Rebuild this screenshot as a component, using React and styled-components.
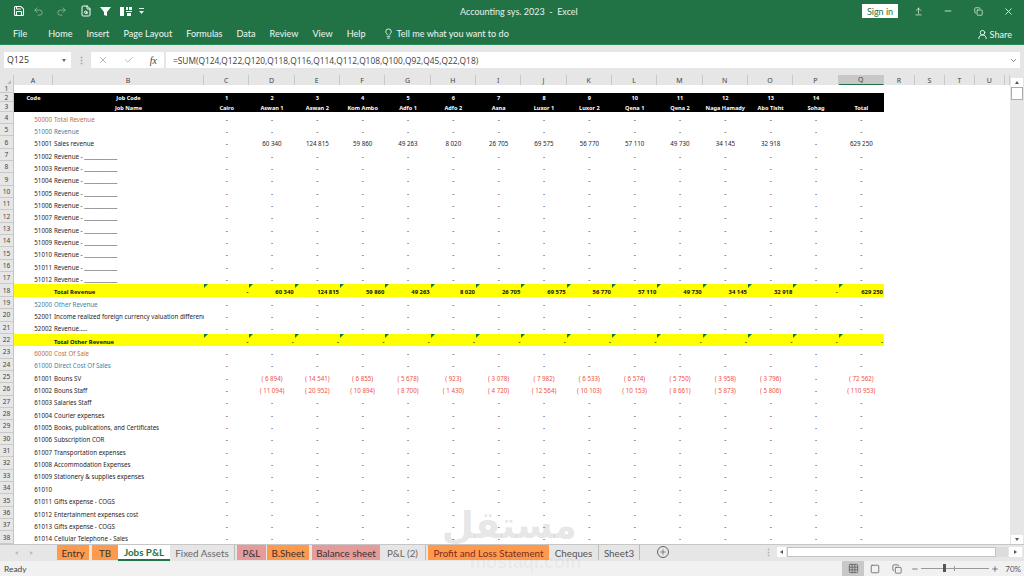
import React from "react";
import styled, { createGlobalStyle } from "styled-components";
import { Save, Undo2, Redo2, FileSearch, Lightbulb, UserRound, X, Check, Minus, Plus, Grid3x3, ChevronDown, Square, Copy, ArrowUpFromLine } from "lucide-react";

const Global = createGlobalStyle`
  html, body { margin: 0; padding: 0; background: #fff; }
  #root { width: 1024px; height: 576px; overflow: hidden; }
  * { box-sizing: border-box; }
`;

const UI = `Lato, "Open Sans", sans-serif`;
const BOX = `"Open Sans", "Noto Sans", sans-serif`;
const CELL = `"Noto Sans", "Liberation Sans", sans-serif`;

const Page = styled.div`
  position: relative; width: 1024px; height: 576px; display: flex; flex-direction: column;
  overflow: hidden; font-family: ${UI}; background: #e6e6e6;
`;
const Green = styled.header`
  height: 45px; background: #217346; color: #fff; display: flex; flex-direction: column;
  border-bottom: 1px solid #2b8a55; flex: none;
`;
const TitleBar = styled.div`
  height: 22px; display: grid; grid-template-columns: 440px 1fr auto; align-items: center;
`;
const Qat = styled.div`
  display: flex; align-items: center; gap: 0; padding-left: 13px; color: #fff;
`;
const QatIcon = styled.span`
  width: ${p => p.$w || 21}px; display: flex; justify-content: flex-start; align-items: center; opacity: ${p => (p.$dim ? 0.45 : 1)};
`;
const Title = styled.div`
  font-size: 9px; padding-left: 20px; color: #e8f1ec; white-space: pre;
`;
const WindowControls = styled.div`
  display: flex; align-items: center; color: #dfeee6; padding-right: 1px;
`;
const SignIn = styled.button`
  width: 36px; height: 14px; border: 0; padding: 0; background: #fff; color: #217346; font: 9px ${UI};
  margin-right: 5px;
`;
const WinBtn = styled.span`
  width: 30px; display: flex; justify-content: center; align-items: center;
`;
const TabsRow = styled.nav`
  height: 22px; display: flex; align-items: center; padding-left: 13px; font-size: 9.1px; color: #f0f6f2;
`;
const RibbonTab = styled.span`
  margin-right: ${p => p.$gap ?? 14}px; white-space: nowrap;
`;
const TellMe = styled.span`
  display: flex; align-items: center; gap: 3px; white-space: nowrap; margin-left: 3px;
`;
const Share = styled.span`
  margin-left: auto; margin-right: 12px; display: flex; align-items: center; gap: 2px; padding-top: 2px;
`;

const FormulaBar = styled.div`
  height: 30px; flex: none; display: flex; align-items: flex-start; padding: 7px 4px 0 4px; font: 8.8px ${BOX}; color: #444;
`;
const NameBox = styled.div`
  width: 67px; height: 16px; background: #fff; display: flex; align-items: center; justify-content: space-between; padding: 0 3px 0 3px; color: #333;
`;
const Caret = styled.span`
  width: 0; height: 0; border: 2.5px solid transparent; border-top: 3px solid #666; border-bottom: 0;
  margin-right: 2px;
`;
const Grip = styled.span`
  width: 20px; height: 16px; display: flex; align-items: center; justify-content: center;
  color: #999; font-size: 9px; font-weight: 700; letter-spacing: 0;
`;
const FxButtons = styled.div`
  width: 73px; height: 16px; background: #fff; display: flex; align-items: center; justify-content: space-between; padding: 0 7px; color: #aaa;
`;
const Fx = styled.i`
  font: italic 10px "Liberation Serif", serif; color: #444;
`;
const FormulaInput = styled.div`
  flex: 1; height: 16px; margin-left: 2px; background: #fff; display: flex; align-items: center; justify-content: space-between;
  padding: 0 2px 0 7px; color: #3d3d3d; font-size: 8.36px; white-space: nowrap;
`;

const SheetArea = styled.div`
  flex: 1; min-height: 0; display: flex; background: #fff;
`;
const SheetMain = styled.div`
  width: 1010px; display: flex; flex-direction: column; overflow: hidden;
`;
const ColHead = styled.div`
  height: 10px; display: flex; background: #e6e6e6; flex: none; margin-bottom: 0;
`;
const Corner = styled.div`
  width: 14px; position: relative; background: #e6e6e6; border-right: 1px solid #c9c9c9;
  &::after { content: ""; position: absolute; right: 2px; bottom: 1px; border: 2.5px solid #bbb; border-top-color: transparent; border-left-color: transparent; }
`;
const ColLabel = styled.div`
  width: ${p => p.$w}px; flex: none; display: flex; justify-content: center; align-items: center;
  font: 7px ${CELL}; color: #444; border-right: 1px solid #c9c9c9;
  background: ${p => (p.$sel ? "#c8c8c8" : "transparent")};
  border-bottom: ${p => (p.$sel ? "1px solid #217346" : "0")};
`;
const Row = styled.div`
  display: flex; height: ${p => p.$h}px; flex: none;
`;
const RowNum = styled.div`
  width: 14px; flex: none; background: #e6e6e6; border-right: 1px solid #c4c4c4; border-bottom: 1px solid #c9c9c9;
  display: flex; justify-content: center; align-items: center; font: 6.6px ${CELL}; color: #444;
`;
const RowBody = styled.div`
  width: 870px; flex: none; display: grid; grid-template-columns: 39px 151px repeat(15, 1fr);
  background: ${p => p.$fill || "transparent"}; color: ${p => p.$ink || "#262626"};
  font-family: ${CELL}; font-size: ${p => p.$size || 6.2}px; font-weight: ${p => (p.$bold ? 700 : 400)};
`;
const Cell = styled.div`
  position: relative; min-width: 0; display: flex; align-items: flex-end; padding-bottom: ${p => p.$pb ?? 0.5}px; white-space: nowrap; overflow: hidden;
  justify-content: ${p => p.$align || "center"}; padding-right: ${p => (p.$align === "flex-end" ? 1 : 0)}px;
  padding-left: ${p => (p.$pl ?? 0)}px;
  color: ${p => p.$ink || "inherit"};
`;
const Flag = styled.span`
  position: absolute; left: 0; top: 0; border: 2px solid transparent; border-top-color: #147a3c; border-left-color: #147a3c;
`;
const VScroll = styled.aside`
  width: 14px; flex: none; background: #e6e6e6; display: flex; flex-direction: column; padding: 3px 1px 0 1px;
`;
const ScrollBtn = styled.div`
  height: 9px; background: #fff; display: flex; align-items: center; justify-content: center; flex: none;
`;
const Thumb = styled.div`
  height: 13px; background: #fff; border: 1px solid #ababab; flex: none;
`;
const Spacer = styled.div`flex: 1;`;
const Tri = styled.span`
  width: 0; height: 0; border: 2px solid transparent;
  ${p => p.$d === "up" && "border-bottom: 3px solid #555; border-top: 0;"}
  ${p => p.$d === "down" && "border-top: 3px solid #555; border-bottom: 0;"}
  ${p => p.$d === "left" && `border-right: 3px solid ${p.$c || "#555"}; border-left: 0;`}
  ${p => p.$d === "right" && `border-left: 3px solid ${p.$c || "#555"}; border-right: 0;`}
`;

const TabBar = styled.div`
  height: 17px; flex: none; display: flex; align-items: flex-start; background: #e6e6e6; border-top: 1px solid #c6c6c6;
`;
const TabNav = styled.div`
  width: 55px; height: 15px; display: flex; align-items: center; gap: 12px; padding-left: 15px;
`;
const SheetTab = styled.div`
  margin-left: ${p => p.$ml ?? 0}px; width: ${p => p.$w}px; height: 15px; display: flex; align-items: center; justify-content: center; white-space: nowrap;
  font-size: 9.8px; flex: none; background: ${p => p.$bg || "transparent"};
  color: ${p => p.$ink || "#333"};
  ${p => p.$plain && "border-right: 1px solid #bbb;"}
  ${p => p.$active && "background:#fff; font-weight:700; border-bottom:2px solid #217346; height:16px;"}
`;
const AddTab = styled.span`
  margin-left: 17px; margin-top: 1px; width: 12px; height: 12px; border: 1px solid #666; border-radius: 50%; display: flex; align-items: center; justify-content: center; color: #555; flex: none;
`;
const Splitter = styled.span`
  margin-left: 95px; margin-top: 2px; width: 7px; color: #aaa; font-size: 9px; font-weight: 700; line-height: 12px; text-align: center;
`;
const HScroll = styled.div`
  margin-left: 6px; margin-top: 2px; width: 245px; height: 10px; display: flex; align-items: stretch; gap: 1px;
`;
const HBtn = styled.div`
  width: ${p => p.$w}px; background: ${p => p.$bg || "#fff"}; display: flex; align-items: center; justify-content: center;
`;
const HTrack = styled.div`
  flex: 1; background: #dcdcdc; display: flex;
`;
const HThumb = styled.div`
  width: 209px; background: #fff; border: 1px solid #c4c4c4;
`;

const Status = styled.footer`
  height: 15px; flex: none; background: #f1f1f1; display: flex; align-items: center; font-size: 8.4px; color: #444; padding-left: 4px;
`;
const ViewBtn = styled.span`
  width: 22px; height: 15px; display: flex; align-items: center; justify-content: center; color: #666;
  background: ${p => (p.$on ? "#c8c8c8" : "transparent")};
`;
const StatusRight = styled.div`
  margin-left: auto; display: flex; align-items: center;
`;
const Zoom = styled.div`
  width: 68px; height: 1px; background: #999; position: relative; margin: 0 2px;
`;
const ZoomThumb = styled.span`
  position: absolute; left: 22px; top: -4px; width: 3px; height: 8px; background: #555;
`;
const ZoomTick = styled.span`
  position: absolute; left: 33px; top: -2px; width: 1px; height: 5px; background: #999;
`;
const ZoomPct = styled.span`
  margin-left: 6px; margin-right: 3px; font-size: 8px; color: #555;
`;
const Watermark = styled.div`
  position: absolute; left: 447px; top: 496px; width: 130px; text-align: center; color: rgba(0,0,0,.11);
  font: 700 37px/60px "DejaVu Sans", sans-serif; pointer-events: none; direction: rtl;
`;
const WatermarkLatin = styled.div`
  position: absolute; left: 470px; top: 551px; color: rgba(0,0,0,.04);
  font: 700 18px/22px "Liberation Sans", sans-serif; pointer-events: none;
`;

const cols = [["A",39],["B",151],...["C","D","E","F","G","H","I","J","K","L","M","N","O","P","Q"].map(c=>[c,45.33]),["R",31],["S",30],["T",30],["U",30],["",5]];
const nums = ["1","2","3","4","5","6","7","8","9","10","11","12","13","14",""];
const names = ["Cairo","Aswan 1","Aswan 2","Kom Ambo","Adfo 1","Adfo 2","Asna","Luxor 1","Luxor 2","Qena 1","Qena 2","Naga Hamady","Abo Tisht","Sohag","Total"];
const sales = ["-","60 340","124 815","59 860","49 263","8 020","26 705","69 575","56 770","57 110","49 730","34 145","32 918","-","629 250"];
const dashes = Array(15).fill("-");
const b25 = ["-","( 6 894)","( 14 541)","( 6 855)","( 5 678)","(  923)","( 3 078)","( 7 982)","( 6 533)","( 6 574)","( 5 750)","( 3 958)","( 3 796)","-","( 72 562)"];
const b26 = ["-","( 11 094)","( 20 952)","( 10 894)","( 8 700)","( 1 430)","( 4 720)","( 12 564)","( 10 103)","( 10 153)","( 8 661)","( 5 873)","( 5 806)","-","( 110 953)"];
const ORANGE = "#c0703a", BLUE = "#3f7f9f";
const blank = "Revenue - ____________";
const rows = [
  [4,"50000","Total Revenue",ORANGE],[5,"51000","Revenue",BLUE],[6,"51001","Sales revenue",null,sales],
  ...Array.from({length:11},(_,i)=>[7+i,String(51002+i),blank]),
  [18,"","Total Revenue","total",sales],
  [19,"52000","Other Revenue",BLUE],[20,"52001","Income realized foreign currency valuation differences"],[21,"52002","Revenue....."],
  [22,"","Total Other Revenue","total",dashes],
  [23,"60000","Cost Of Sale",ORANGE],[24,"61000","Direct Cost Of Sales",BLUE],
  [25,"61001","Bouns SV",null,b25],[26,"61002","Bouns Staff",null,b26],
  [27,"61003","Salaries Staff"],[28,"61004","Courier expenses"],[29,"61005","Books, publications, and Certificates"],
  [30,"61006","Subscription COR"],[31,"61007","Transportation expenses"],[32,"61008","Accommodation Expenses"],
  [33,"61009","Stationery & supplies expenses"],[34,"61010",""],[35,"61011","Gifts expense - COGS"],
  [36,"61012","Entertainment expenses cost"],[37,"61013","Gifts expense - COGS"],[38,"61014","Cellular Telephone - Sales"],
];
const ribbon = [["File",21],["Home"],["Insert"],["Page Layout"],["Formulas"],["Data"],["Review"],["View"],["Help",14]];
const tabs = [
  {t:"Entry",w:32,bg:"#ff9a4d",ml:2},{t:"TB",w:26,bg:"#ff9a4d",ml:3},{t:"Jobs P&L",w:52,active:1,ink:"#217346"},
  {t:"Fixed Assets",w:65,ink:"#666",plain:1},{t:"P&L",w:29,bg:"#e79a9a",ml:2},{t:"B.Sheet",w:42,bg:"#ff9a4d",ml:1},
  {t:"Balance sheet",w:68,bg:"#e79a9a",ml:3},{t:"P&L (2)",w:46,ink:"#666",plain:1},{t:"Profit and Loss Statement",w:121,bg:"#ff9a4d",ml:2,ink:"#7a2a1a"},
  {t:"Cheques",w:50,ink:"#555",plain:1},{t:"Sheet3",w:41,ink:"#555",plain:1},
];

function DataCells({ r }) {
  const [, , , kind, values] = r;
  const isTotal = kind === "total";
  const data = values || dashes;
  return data.map((v, i) => {
    const red = v.startsWith("(");
    return (
      <Cell key={i} $align={isTotal ? "flex-end" : "center"} $ink={red ? "#f0503f" : undefined}>
        {isTotal && <Flag />}
        {v}
      </Cell>
    );
  });
}

export default function App() {
  return (
    <Page>
      <Global />
      <Green>
        <TitleBar>
          <Qat>
            <QatIcon $w={20}><Save size={12} strokeWidth={2.2} /></QatIcon>
            <QatIcon $w={23} $dim><Undo2 size={11} /></QatIcon>
            <QatIcon $w={24} $dim><Redo2 size={11} /></QatIcon>
            <QatIcon $w={20}><FileSearch size={12} /></QatIcon>
            <QatIcon $w={20}>
              <svg width="11" height="11" viewBox="0 0 11 11"><path d="M0 1h11L7 6v4L4 9V6z" fill="#fff" /></svg>
            </QatIcon>
            <QatIcon $w={19}>
              <svg width="12" height="11" viewBox="0 0 12 11"><path d="M0 1h4v9H0zM6 1h2v3H6zM9 1h3v3H9zM6 5h6v1H6zM7 7h4v3H7z" fill="#fff" /></svg>
            </QatIcon>
            <QatIcon $w={8}>
              <svg width="5" height="6" viewBox="0 0 5 6"><path d="M0 0h5v1H0zM0 3h5L2.500 6z" fill="#dfeee6" /></svg>
            </QatIcon>
          </Qat>
          <Title>Accounting sys. 2023  -  Excel</Title>
          <WindowControls>
            <SignIn>Sign in</SignIn>
            <WinBtn><ArrowUpFromLine size={9} /></WinBtn>
            <WinBtn><Minus size={10} /></WinBtn>
            <WinBtn><Copy size={9} /></WinBtn>
            <WinBtn><X size={11} /></WinBtn>
          </WindowControls>
        </TitleBar>
        <TabsRow>
          {ribbon.map(([t, g]) => <RibbonTab key={t} $gap={g}>{t}</RibbonTab>)}
          <TellMe><Lightbulb size={11} />Tell me what you want to do</TellMe>
          <Share><UserRound size={11} />Share</Share>
        </TabsRow>
      </Green>
      <FormulaBar>
        <NameBox>Q125<Caret /></NameBox>
        <Grip>⋮</Grip>
        <FxButtons><X size={10} /><Check size={10} /><Fx>fx</Fx></FxButtons>
        <FormulaInput>=SUM(Q124,Q122,Q120,Q118,Q116,Q114,Q112,Q108,Q100,Q92,Q45,Q22,Q18)<ChevronDown size={9} color="#555" /></FormulaInput>
      </FormulaBar>
      <SheetArea>
        <SheetMain>
          <ColHead>
            <Corner />
            {cols.map(([c, w], i) => <ColLabel key={i} $w={w} $sel={c === "Q"}>{c}</ColLabel>)}
          </ColHead>
          <Row $h={8.3}><RowNum>1</RowNum></Row>
          <Row $h={9.2}>
            <RowNum>2</RowNum>
            <RowBody $fill="#000" $ink="#fff" $bold $size={5.6}>
              <Cell $pb={0}>Code</Cell><Cell $pb={0}>Job Code</Cell>
              {nums.map((n, i) => <Cell key={i} $pb={0}>{n}</Cell>)}
            </RowBody>
          </Row>
          <Row $h={9.2}>
            <RowNum>3</RowNum>
            <RowBody $fill="#000" $ink="#fff" $bold $size={5.6}>
              <Cell $pb={0} /><Cell $pb={0}>Job Name</Cell>
              {names.map(n => <Cell key={n} $pb={0}>{n}</Cell>)}
            </RowBody>
          </Row>
          {rows.map(r => {
            const [n, code, name, kind] = r;
            const total = kind === "total";
            const tint = !total && kind ? kind : undefined;
            return (
              <Row key={n} $h={12.35}>
                <RowNum>{n}</RowNum>
                <RowBody $fill={total ? "#ffff00" : undefined} $bold={total} $ink={total ? "#111" : undefined} $size={total ? 5.9 : undefined}>
                  <Cell $align="flex-end" $ink={tint}>{code}</Cell>
                  <Cell $align="flex-start" $pl={1} $ink={tint}>{name}</Cell>
                  <DataCells r={r} />
                </RowBody>
              </Row>
            );
          })}
        </SheetMain>
        <VScroll>
          <ScrollBtn><Tri $d="up" /></ScrollBtn>
          <Thumb />
          <Spacer />
          <ScrollBtn><Tri $d="down" /></ScrollBtn>
        </VScroll>
      </SheetArea>
      <TabBar>
        <TabNav><Tri $d="left" $c="#bbb" /><Tri $d="right" $c="#bbb" /></TabNav>
        {tabs.map(t => (
          <SheetTab key={t.t} $w={t.w} $bg={t.bg} $ml={t.ml} $ink={t.ink} $plain={t.plain} $active={t.active}>{t.t}</SheetTab>
        ))}
        <AddTab><Plus size={8} /></AddTab>
        <Splitter>⋮</Splitter>
        <HScroll>
          <HBtn $w={9}><Tri $d="left" /></HBtn>
          <HTrack><HThumb /></HTrack>
          <HBtn $w={13}><Tri $d="right" /></HBtn>
        </HScroll>
      </TabBar>
      <Status>
        Ready
        <StatusRight>
          <ViewBtn $on><Grid3x3 size={11} /></ViewBtn>
          <ViewBtn><Square size={10} /></ViewBtn>
          <ViewBtn><Copy size={10} /></ViewBtn>
          <Minus size={8} color="#444" style={{ marginLeft: 3 }} />
          <Zoom><ZoomTick /><ZoomThumb /></Zoom>
          <Plus size={8} color="#444" />
          <ZoomPct>70%</ZoomPct>
        </StatusRight>
      </Status>
      <Watermark>مستقل</Watermark>
      <WatermarkLatin>mostaql.com</WatermarkLatin>
    </Page>
  );
}
